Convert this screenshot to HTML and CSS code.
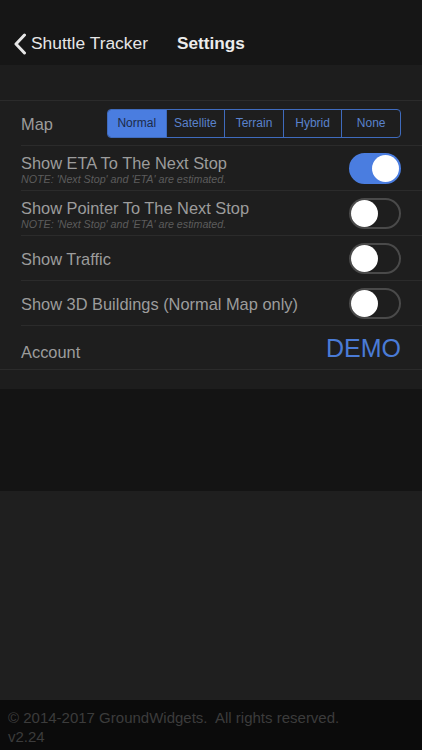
FILE: index.html
```html
<!DOCTYPE html>
<html>
<head>
<meta charset="utf-8">
<link rel="stylesheet" href="styles.css">
</head>
<body>
<div class="screen">
  <header class="navbar">
    <div class="back">
      <svg class="chev" width="14" height="22" viewBox="0 0 14 22"><path d="M11.5 2 L3 11 L11.5 20" fill="none" stroke="#e6e6e6" stroke-width="3" stroke-linecap="round" stroke-linejoin="round"/></svg>
      <span class="back-text">Shuttle Tracker</span>
    </div>
    <div class="title">Settings</div>
  </header>
  <div class="gap-top"></div>
  <div class="list">
    <div class="row">
      <div class="label single">Map</div>
      <div class="seg">
        <div class="seg-item active">Normal</div>
        <div class="seg-item">Satellite</div>
        <div class="seg-item">Terrain</div>
        <div class="seg-item">Hybrid</div>
        <div class="seg-item">None</div>
      </div>
    </div>
    <div class="row">
      <div class="text">
        <div class="label">Show ETA To The Next Stop</div>
        <div class="note">NOTE: 'Next Stop' and 'ETA' are estimated.</div>
      </div>
      <div class="toggle on"><div class="knob"></div></div>
    </div>
    <div class="row">
      <div class="text">
        <div class="label">Show Pointer To The Next Stop</div>
        <div class="note">NOTE: 'Next Stop' and 'ETA' are estimated.</div>
      </div>
      <div class="toggle"><div class="knob"></div></div>
    </div>
    <div class="row">
      <div class="label single">Show Traffic</div>
      <div class="toggle"><div class="knob"></div></div>
    </div>
    <div class="row">
      <div class="label single">Show 3D Buildings (Normal Map only)</div>
      <div class="toggle"><div class="knob"></div></div>
    </div>
    <div class="row last">
      <div class="label account">Account</div>
      <div class="demo">DEMO</div>
    </div>
  </div>
  <div class="band"></div>
  <div class="dark"></div>
  <div class="fill"></div>
  <footer class="footer">
    <div>© 2014-2017 GroundWidgets.&nbsp; All rights reserved.</div>
    <div>v2.24</div>
  </footer>
</div>
</body>
</html>
```
FILE: styles.css
```css
html, body {
  margin: 0;
  padding: 0;
  background: #1f1f1f;
}
.screen {
  width: 422px;
  height: 750px;
  display: flex;
  flex-direction: column;
  font-family: "Liberation Sans", Arial, sans-serif;
  overflow: hidden;
}
.navbar {
  height: 65px;
  flex: none;
  background: #161616;
  display: flex;
  align-items: center;
  padding-top: 22px;
  box-sizing: border-box;
  padding-left: 13px;
}
.back {
  display: flex;
  align-items: center;
  gap: 4px;
}
.chev {
  display: block;
}
.back-text {
  color: #e6e6e6;
  font-size: 17.4px;
}
.title {
  margin-left: 29px;
  color: #ececec;
  font-size: 17.2px;
  font-weight: bold;
}
.gap-top {
  height: 35px;
  flex: none;
  background: #1d1d1d;
  border-bottom: 1px solid #2b2b2b;
}
.list {
  background: #1e1e1e;
  padding-left: 21px;
  flex: none;
}
.row {
  height: 44px;
  border-bottom: 1px solid #2b2b2b;
  display: flex;
  align-items: center;
  justify-content: space-between;
  padding-right: 21px;
}
.row.last {
  border-bottom: none;
  height: 43px;
}
.label {
  color: #9c9c9c;
  font-size: 16.4px;
}
.label.single {
  padding-top: 2px;
}
.label.account {
  padding-top: 9px;
}
.text {
  display: flex;
  flex-direction: column;
  padding-top: 3px;
}
.note {
  color: #5c5c5c;
  font-size: 10.7px;
  font-style: italic;
  margin-top: 0;
}
.seg {
  display: flex;
  width: 294px;
  box-sizing: border-box;
  border: 1px solid #3f6bbd;
  border-radius: 4px;
  overflow: hidden;
  height: 29px;
}
.seg-item {
  flex: 1;
  display: flex;
  align-items: center;
  justify-content: center;
  color: #5a82cc;
  font-size: 12px;
  border-left: 1px solid #3f6bbd;
}
.seg-item:first-child {
  border-left: none;
}
.seg-item.active {
  background: #4a7de0;
  color: #1c2a48;
}
.toggle {
  width: 52px;
  height: 31px;
  border-radius: 16px;
  box-sizing: border-box;
  border: 2px solid #4a4a4a;
  background: #1e1e1e;
  position: relative;
}
.toggle .knob {
  position: absolute;
  top: 0;
  left: 0;
  width: 27px;
  height: 27px;
  border-radius: 50%;
  background: #ffffff;
}
.toggle.on {
  background: #4a7de0;
  border-color: #4a7de0;
}
.toggle.on .knob {
  left: auto;
  right: 0;
}
.demo {
  color: #4a7bd6;
  font-size: 25px;
  padding-top: 2px;
}
.band {
  height: 19px;
  flex: none;
  background: #1d1d1d;
  border-top: 1px solid #2b2b2b;
}
.dark {
  height: 102px;
  flex: none;
  background: #141414;
}
.fill {
  flex: 1;
  background: #1f1f1f;
}
.footer {
  height: 50px;
  flex: none;
  background: #0b0b0b;
  color: #3c3c3c;
  font-size: 15px;
  padding: 8px 0 0 8px;
  box-sizing: border-box;
  line-height: 19px;
}
```
